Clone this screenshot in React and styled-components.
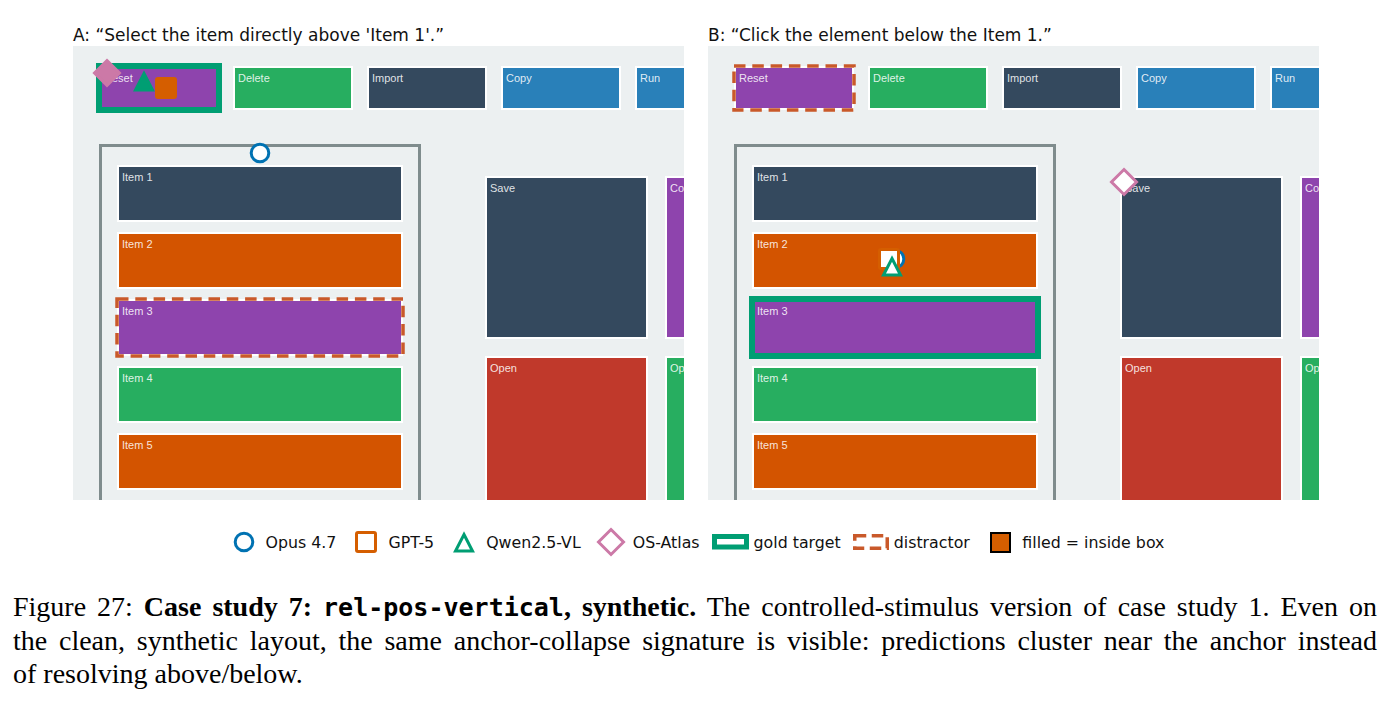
import React from 'react';
import styled, { createGlobalStyle, css } from 'styled-components';

const GlobalStyle = createGlobalStyle`
  html, body {
    margin: 0;
    padding: 0;
    background: #fff;
  }
  body {
    width: 1392px;
    height: 710px;
    overflow: hidden;
  }
`;

const fills = {
  dark: '#34495e',
  orange: '#d35400',
  purple: '#8e44ad',
  green: '#27ae60',
  blue: '#2980b9',
  red: '#c0392b',
};

const ink = {
  opus: '#0072b2',
  gpt: '#d55e00',
  qwen: '#009e73',
  atlas: '#cc79a7',
  gold: '#009e73',
  distractor: '#c9592a',
};

const Figure = styled.div`
  padding-top: 26px;
`;

const PanelRow = styled.div`
  display: flex;
  gap: 24px;
  padding-left: 73px;
`;

const PanelColumn = styled.div`
  display: flex;
  flex-direction: column;
  gap: 2px;
`;

const PanelTitle = styled.div`
  font-family: "DejaVu Sans", sans-serif;
  font-size: 17px;
  line-height: 18px;
  color: #111;
  white-space: nowrap;
`;

const Panel = styled.div`
  position: relative;
  width: 611px;
  height: 454px;
  box-sizing: border-box;
  overflow: hidden;
  background: #ecf0f1;
  padding: 20px 0 0 26px;
  display: flex;
  flex-direction: column;
  gap: 34px;
`;

const Toolbar = styled.div`
  display: flex;
  gap: 14px;
`;

const Workspace = styled.div`
  display: flex;
  align-items: flex-start;
  gap: 64px;
`;

const ListBox = styled.div`
  flex: none;
  width: 322px;
  box-sizing: border-box;
  border: 3px solid #7f8c8d;
  padding: 18px 15px;
  display: flex;
  flex-direction: column;
  gap: 10px;
`;

const CardGrid = styled.div`
  flex: none;
  margin-top: 32px;
  display: grid;
  grid-template-columns: repeat(2, 163px);
  grid-auto-rows: 163px;
  gap: 17px;
`;

const Tile = styled.div`
  position: relative;
  flex: none;
  box-sizing: border-box;
  background: ${p => fills[p.$fill]};
  border: 2px solid #fff;
  padding: 4px 3px;
  font-family: "Liberation Sans", Arial, sans-serif;
  font-size: 11px;
  line-height: 13px;
  color: rgba(255, 255, 255, 0.86);
  white-space: nowrap;
  ${p => p.$gold && css`
    outline: 6px solid ${ink.gold};
    outline-offset: -3px;
  `}
`;

const ToolButton = styled(Tile)`
  width: 120px;
  height: 44px;
`;

const ListItem = styled(Tile)`
  width: 286px;
  height: 57px;
`;

const Card = styled(Tile)`
  width: 163px;
  height: 163px;
`;

const DashFrame = styled.svg`
  position: absolute;
  inset: -2px;
  width: calc(100% + 4px);
  height: calc(100% + 4px);
  overflow: visible;
  pointer-events: none;
`;

const Marker = styled.svg`
  position: absolute;
  left: ${p => p.$x - 15}px;
  top: ${p => p.$y - 15}px;
  width: 30px;
  height: 30px;
  overflow: visible;
`;

const Legend = styled.div`
  display: flex;
  justify-content: center;
  align-items: center;
  height: 28px;
  margin-top: 28px;
  padding-left: 6px;
  font-family: "DejaVu Sans", sans-serif;
  font-size: 15.8px;
  color: #111;
  white-space: nowrap;
`;

const LegendEntry = styled.div`
  display: flex;
  align-items: center;
  gap: ${p => p.$gap ?? 12}px;
  margin-left: ${p => p.$lead ?? 20}px;
  &:first-child {
    margin-left: 0;
  }
`;

const Swatch = styled.svg`
  flex: none;
  overflow: visible;
`;

const Caption = styled.div`
  margin: 34px 15px 0 13px;
  font-family: "Liberation Serif", "Times New Roman", serif;
  font-size: 28px;
  line-height: 33px;
  color: #000;
`;

const CaptionLine = styled.div`
  text-align: justify;
  text-align-last: ${p => (p.$last ? 'left' : 'justify')};
`;

const Strong = styled.b`
  font-weight: bold;
`;

const Code = styled.code`
  font-family: "DejaVu Sans Mono", "Liberation Mono", monospace;
  font-weight: bold;
  font-size: 25px;
`;

function Shape({ kind, filled }) {
  const c = ink[kind];
  const fill = filled ? c : '#fff';
  if (kind === 'opus') {
    return <circle cx="15" cy="15" r="8.8" fill={fill} stroke={c} strokeWidth="3" />;
  }
  if (kind === 'gpt') {
    return <rect x="5.5" y="5.5" width="19" height="19" rx="1.5" fill={fill} stroke={c} strokeWidth="3" />;
  }
  if (kind === 'qwen') {
    return <polygon points="15,7.5 23.5,24 6.5,24" fill={fill} stroke={c} strokeWidth="3" strokeMiterlimit="10" />;
  }
  return <polygon points="15,2.5 27.5,15 15,27.5 2.5,15" fill={fill} stroke={c} strokeWidth="3" />;
}

const toolbar = [
  ['Reset', 'purple'],
  ['Delete', 'green'],
  ['Import', 'dark'],
  ['Copy', 'blue'],
  ['Run', 'blue'],
];

const items = [
  ['Item 1', 'dark'],
  ['Item 2', 'orange'],
  ['Item 3', 'purple'],
  ['Item 4', 'green'],
  ['Item 5', 'orange'],
];

const cards = [
  ['Save', 'dark'],
  ['Copy', 'purple'],
  ['Open', 'red'],
  ['Options', 'green'],
];

const panels = [
  {
    title: 'A: \u201cSelect the item directly above \'Item 1\'.\u201d',
    gold: 'tool-0',
    distractor: 'item-2',
    markers: [
      { kind: 'opus', x: 187, y: 106.7 },
      { kind: 'gpt', x: 93.2, y: 41.8, filled: true },
      { kind: 'qwen', x: 71.3, y: 35, filled: true },
      { kind: 'atlas', x: 34.3, y: 27.3, filled: true },
    ],
  },
  {
    title: 'B: \u201cClick the element below the Item 1.\u201d',
    gold: 'item-2',
    distractor: 'tool-0',
    markers: [
      { kind: 'opus', x: 186.7, y: 213 },
      { kind: 'gpt', x: 181, y: 213.3 },
      { kind: 'qwen', x: 184.2, y: 219.9 },
      { kind: 'atlas', x: 416.3, y: 135.7 },
    ],
  },
];

function Dashes() {
  return (
    <DashFrame>
      <rect x="0" y="0" width="100%" height="100%" fill="none"
        stroke={ink.distractor} strokeWidth="3.5" strokeDasharray="11.5 6.8" />
    </DashFrame>
  );
}

function ScreenPanel({ panel }) {
  const mark = key => ({
    $gold: panel.gold === key,
    dashed: panel.distractor === key,
  });
  return (
    <PanelColumn>
      <PanelTitle>{panel.title}</PanelTitle>
      <Panel>
        <Toolbar>
          {toolbar.map(([label, fill], i) => {
            const m = mark(`tool-${i}`);
            return (
              <ToolButton key={label} $fill={fill} $gold={m.$gold}>
                {label}
                {m.dashed && <Dashes />}
              </ToolButton>
            );
          })}
        </Toolbar>
        <Workspace>
          <ListBox>
            {items.map(([label, fill], i) => {
              const m = mark(`item-${i}`);
              return (
                <ListItem key={label} $fill={fill} $gold={m.$gold}>
                  {label}
                  {m.dashed && <Dashes />}
                </ListItem>
              );
            })}
          </ListBox>
          <CardGrid>
            {cards.map(([label, fill]) => (
              <Card key={label + fill} $fill={fill}>{label}</Card>
            ))}
          </CardGrid>
        </Workspace>
        {panel.markers.map(m => (
          <Marker key={m.kind} $x={m.x} $y={m.y} viewBox="0 0 30 30">
            <Shape kind={m.kind} filled={m.filled} />
          </Marker>
        ))}
      </Panel>
    </PanelColumn>
  );
}

function ModelSwatch({ kind }) {
  return (
    <Swatch width="20" height="20" viewBox="5 5 20 20">
      <Shape kind={kind} />
    </Swatch>
  );
}

export default function App() {
  return (
    <>
      <GlobalStyle />
      <Figure>
        <PanelRow>
          {panels.map(p => <ScreenPanel key={p.title} panel={p} />)}
        </PanelRow>
        <Legend>
          <LegendEntry><ModelSwatch kind="opus" />Opus 4.7</LegendEntry>
          <LegendEntry><ModelSwatch kind="gpt" />GPT-5</LegendEntry>
          <LegendEntry><ModelSwatch kind="qwen" />Qwen2.5-VL</LegendEntry>
          <LegendEntry><ModelSwatch kind="atlas" />OS-Atlas</LegendEntry>
          <LegendEntry $lead={12} $gap={5}>
            <Swatch width="37" height="16" viewBox="0 0 37 16">
              <rect x="2.5" y="2.5" width="32" height="10.5" fill="#fff" stroke={ink.gold} strokeWidth="5" />
            </Swatch>
            gold target
          </LegendEntry>
          <LegendEntry $lead={12.5} $gap={4.5}>
            <Swatch width="36" height="16" viewBox="0 0 36 16">
              <rect x="1.75" y="1.75" width="32.5" height="12.5" fill="none" stroke={ink.distractor}
                strokeWidth="3.5" strokeDasharray="11.5 5.5" />
            </Swatch>
            distractor
          </LegendEntry>
          <LegendEntry $lead={20} $gap={11.5}>
            <Swatch width="21" height="21" viewBox="0 0 21 21">
              <rect x="1" y="1" width="19" height="19" fill={ink.gpt} stroke="#000" strokeWidth="2" />
            </Swatch>
            filled = inside box
          </LegendEntry>
        </Legend>
      </Figure>
      <Caption>
        <CaptionLine>
          Figure 27: <Strong>Case study 7: <Code>rel-pos-vertical</Code>, synthetic.</Strong> The
          controlled-stimulus version of case study 1. Even on
        </CaptionLine>
        <CaptionLine>
          the clean, synthetic layout, the same anchor-collapse signature is visible: predictions
          cluster near the anchor instead
        </CaptionLine>
        <CaptionLine $last>of resolving above/below.</CaptionLine>
      </Caption>
    </>
  );
}
